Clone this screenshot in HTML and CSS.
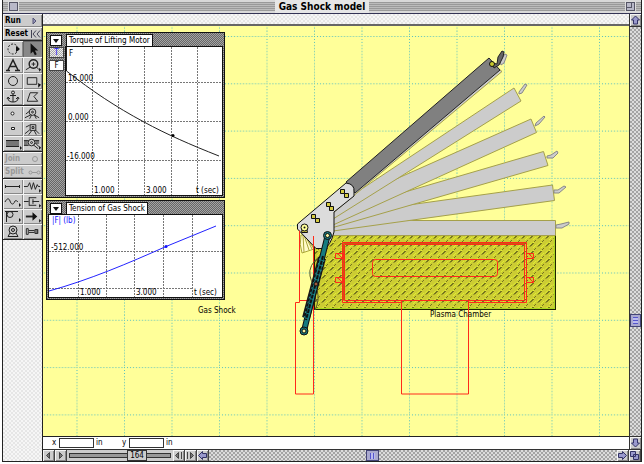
FILE: index.html
```html
<!DOCTYPE html>
<html lang="en">
<head>
  <meta charset="UTF-8" />
  <meta name="viewport" content="width=device-width, initial-scale=1.0" />
  <title>Gas Shock model</title>
  <link rel="stylesheet" href="styles.css">
</head>
<body>
  <div class="window">
    <!-- Title bar -->
    <header class="titlebar">
      <button class="box" aria-label="Close"></button>
      <h1>Gas Shock model</h1>
      <button class="box zoom-box" aria-label="Zoom"></button>
    </header>

    <div class="main">
      <!-- Tool palette -->
      <nav class="palette" aria-label="Tools">
        <button class="command run">Run <svg width="5" height="8"><path d="M1 1v6l3-3z" fill="#99b" stroke="#557"/></svg></button>
        <button class="command last">Reset<svg width="11" height="8"><path d="M1.500 0v8M6 .5L3 4l3 3.500M10 .5L7 4l3 3.500" fill="none" stroke="#445"/></svg></button>

        <div class="tools tall">
          <button aria-label="Rotate"><svg viewBox="0 0 20 16"><circle cx="10" cy="8" r="5" stroke-dasharray="2 1.500"/><path class="solid" d="M13 5l4 3-4 3z"/></svg></button>
          <button class="active" aria-label="Select"><svg viewBox="0 0 20 16"><path class="solid" d="M8 2v11l2.500-2.500 2 4 2-1-2-4h3.500z"/></svg></button>
          <button aria-label="Text"><svg viewBox="0 0 20 16"><path d="M5 13l5-10 5 10M7 9.500h6M3 13.500h4M12 13.500h5" stroke-width="1.500"/></svg></button>
          <button aria-label="Magnify"><svg viewBox="0 0 20 16"><circle cx="11" cy="7" r="4.500" stroke-width="1.500"/><path d="M9 7h4M11 5v4M8 10l-5 3M14 10l3 3"/><path class="solid" d="M17 11l2 2-2 2z"/></svg></button>
          <button aria-label="Circle"><svg viewBox="0 0 20 16"><circle cx="10" cy="8" r="4.500"/></svg></button>
          <button aria-label="Rectangle"><svg viewBox="0 0 20 16"><path d="M4.500 4.500h10v7h-10z"/><path class="solid" d="M16 10l3 2-3 3z"/></svg></button>
          <button aria-label="Anchor"><svg viewBox="0 0 20 16"><circle cx="10" cy="3.500" r="1.500"/><path d="M10 5v8M7 6.500h6M5 9c0 3 2 4 5 4s5-1 5-4M4 10l1-2 2 2M13 10l2-2 1 2"/></svg></button>
          <button aria-label="Polygon"><svg viewBox="0 0 20 16"><path d="M7.500 3.500h8l-4 4 4 5h-11z"/></svg></button>
        </div>

        <div class="tools">
          <button aria-label="Point"><svg viewBox="0 0 20 15"><circle cx="9.500" cy="7.500" r="1.500" class="light"/></svg></button>
          <button aria-label="Pin joint"><svg viewBox="0 0 20 15"><circle cx="10" cy="6" r="3.500"/><circle cx="10" cy="6" r="1"/><path d="M8 9l-6 3M12 9l5 3M7 5L3 8M9 9l-2 4M12 9l2 4"/></svg></button>
          <button aria-label="Square point"><svg viewBox="0 0 20 15"><path d="M8.500 6.500h3v2h-3z" class="light"/></svg></button>
          <button aria-label="Rigid joint"><svg viewBox="0 0 20 15"><path d="M7.500 3.500h6v6h-6zM9.500 5.500h2v2h-2zM7 9l-5 4M13 9l4 4M7 4L3 6M9 10l-3 4M12 10l2 4"/></svg></button>
          <button aria-label="Slot joint"><svg viewBox="0 0 20 15"><path class="bar" d="M3 5h13v5H3z"/><path d="M3 4.500h13M3 10.500h13"/><path class="solid" d="M17 10l2 2-2 2z"/></svg></button>
          <button aria-label="Keyed slot joint"><svg viewBox="0 0 20 15"><path class="bar" d="M1 4h4v5H1zM13 4h4v4h-4z"/><circle cx="9" cy="6.500" r="3.500"/><circle cx="9" cy="6.500" r="1"/><path d="M1 4.500h5M1 9.500h5M12 4.500h5M11 9l5 4M13 7l4 4"/><path class="solid" d="M17 10l2 2-2 2z"/></svg></button>
        </div>
        <button class="command off" disabled>Join <svg width="10" height="8"><circle cx="4" cy="4" r="2.500" fill="none" stroke="#999"/></svg></button>
        <button class="command off last" disabled>Split<svg width="13" height="8"><path d="M4 4.500h5" stroke="#999"/><circle cx="2.500" cy="4.500" r="1.500" fill="none" stroke="#999"/><circle cx="10.500" cy="4.500" r="1.500" fill="none" stroke="#999"/></svg></button>

        <div class="tools">
          <button aria-label="Rod"><svg viewBox="0 0 20 15"><path d="M2 7.500h15M2.500 6v3M16.500 6v3"/></svg></button>
          <button aria-label="Spring"><svg viewBox="0 0 20 15"><path d="M1 7.500h4l2-4 2 7 2-7 2 7 2-5 1 2h2"/><path class="solid" d="M17 10l2 2-2 2z"/></svg></button>
          <button aria-label="Rope"><svg viewBox="0 0 20 15"><path d="M2 8c2-4 4-4 5-1s3 5 5 0c1-1 2 0 3 1"/><path class="solid" d="M16 9l2 2-2 2z"/></svg></button>
          <button aria-label="Damper"><svg viewBox="0 0 20 15"><path d="M1 7.500h5M6.500 3v9M14 3.500H6.500M14 11.500H6.500M10.500 5v5M10 7.500h7"/><path class="solid" d="M17 10l2 2-2 2z"/></svg></button>
          <button aria-label="Pulley"><svg viewBox="0 0 20 15"><circle cx="7" cy="5.500" r="3"/><path d="M2 2.500h13M3.500 3v10"/><path class="solid" d="M16 9l2 2-2 2z"/></svg></button>
          <button aria-label="Force"><svg viewBox="0 0 20 15"><path d="M3 7.500h8" stroke-width="2"/><path class="solid" d="M10 3l5 4.500-5 4.500zM17 10l2 2-2 2z"/></svg></button>
          <button aria-label="Motor"><svg viewBox="0 0 20 15"><circle cx="10" cy="6" r="4"/><circle cx="10" cy="6" r="1.500"/><path d="M7 9l-2 3.500h10L13 9"/></svg></button>
          <button aria-label="Actuator"><svg viewBox="0 0 20 15"><path class="bar" d="M13 5h3v5h-3z"/><path d="M3.500 4.500h2v6h-2zM6 6.500h6M6 8.500h6M12.500 5.500h3v4h-3z"/></svg></button>
        </div>
      </nav>

      <div class="document">
        <div class="ruler"></div>

        <!-- Drawing canvas -->
        <main class="canvas">
          <svg class="drawing" aria-label="Gas shock mechanism">
            <defs>
              <pattern id="grid" x="29" y="36" width="47.500" height="47.300" patternUnits="userSpaceOnUse">
                <path d="M0 .5h47M.5 0v47" stroke="#4fbcc0" stroke-dasharray="1 2" fill="none"/>
              </pattern>
              <pattern id="hatch" width="8" height="8" patternUnits="userSpaceOnUse">
                <rect width="8" height="8" fill="#cccc33"/>
                <path d="M1 5.500l3-3M5 8l3-3M5 3l2-2" stroke="#e0f030"/>
                <path d="M2 6.500l3.500-3.500" stroke="#22220a"/>
                <path d="M6 2l2-2" stroke="#77771c"/>
              </pattern>
            </defs>
            <g transform="translate(-43 -26)">
              <rect x="43" y="26" width="100%" height="100%" fill="url(#grid)"/>

              <!-- Plasma chamber -->
              <rect x="314.500" y="235.500" width="241" height="74" fill="url(#hatch)" stroke="#222200"/>
              <path d="M554.500 236v72.500H315" fill="none" stroke="#a8d820"/>
              <g class="outline">
                <path d="M343.500 243.500h181M343.500 243.500v57" stroke="#c85a10"/>
                <path d="M342.500 242.500h184v60h-58M401 302.500h-58.500v-60M344.500 300.500v-56h180v56z"/>
                <rect x="372.500" y="259.500" width="125" height="17" rx="3"/>
                <path d="M335.500 253.500h8v5h-8zM335.500 277.500h8v5h-8zM526.500 253.500h7v5h-7zM526.500 277.500h7v5h-7zM338 254l4 4M338 278l4 4M529 254l4 4M529 278l4 4"/>
                <path d="M401.500 300.500h67v93.500h-67z"/>
              </g>

              <!-- Traced positions of the arm -->
              <g class="ghost">
                <path d="M333 220.500h222.500v15H333z"/>
                <path d="M333 215.500L552.500 185l2 15.500L333 231z"/>
                <path d="M333 213L543.500 151.500l4.500 14L333 227.500z"/>
                <path d="M333 207L531 119l5.500 13.500L333 225z"/>
                <path d="M333 208L514 88l7 13L333 219z"/>
                <path d="M350 188L490 62l12 9.500L333 213z"/>
                <path class="hook" d="M501 65l3-2 3-8-2-1-5 7zM519 94l3-1 5-8-2-1-6 8zM535 126l4-2 6-7-1-1-8 7zM547 158h6l5-5-1-2-6 4-4 1zM554 193h5l7-6-2-1-6 4h-4zM556 228h6l7-4v-2l-8 2-5 1z"/>
              </g>
              <path d="M301 235q-2 10 1 18l12-4-9-14zM303 235l1 17M304 235l5 15M305 235l7 14" fill="#fffcc8" stroke="#aaa638"/>

              <!-- Arm and plate -->
              <path d="M346 182L489 58l11 12L355 193z" fill="#808080" stroke="#222"/>
              <path d="M492 63l5 1 1-7 4-6 2 1-1 5-4 8-5 3z" fill="#666" stroke="#222"/>
              <circle cx="492" cy="64" r="2.500" fill="#c9c92c" stroke="#111"/>
              <path d="M297.500 224L346 183q9 1 8 9v4l-20 16v20q-4 15-10 16.500h-8L297.500 229z" fill="#dcdcdc" stroke="#111"/>
              <path class="outline" d="M313.500 236v158h-18v-91.500h4v-72M299.500 300.500h14"/>
              <g fill="#d6cc42" stroke="#111">
                <path d="M340.500 189.500h4v4h-4zM344.500 193.500h4v4h-4zM326.500 202.500h4v4h-4zM329.500 206.500h4v4h-4zM311.500 214.500h4v4h-4zM315.500 218.500h4v4h-4z"/>
                <path d="M301.500 232.500l1-5h4l1 5z"/>
                <circle cx="304.500" cy="227.500" r="3.500" fill="#ffff9a"/>
              </g>
              <circle cx="304.500" cy="227.500" r="1" fill="#111"/>

              <!-- Gas shock -->
              <path d="M320 256q-12 9-10 20t10 9M318 280q-5 8-2 22M317 290q3 10-2 20" fill="none" stroke="#55552a"/>
              <path d="M322 258L306 318" stroke="#1a1a1a" stroke-width="8"/>
              <path d="M327.500 236L304 331" stroke="#111" stroke-width="6" stroke-linecap="round"/>
              <path d="M327.500 236L304 331" stroke="#167b80" stroke-width="4" stroke-linecap="round"/>
              <path d="M320 258L304 318M324 260L308 318" stroke="#2c8c90" stroke-dasharray="2 3"/>
              <path d="M323 256L306 320" stroke="#111" stroke-width="2" stroke-dasharray="4 1"/>
              <g fill="#f4f3a0" stroke="#111">
                <circle cx="327.500" cy="235.500" r="4" fill="#167b80"/>
                <circle cx="327.500" cy="235.500" r="2"/>
                <circle cx="304" cy="331" r="4" fill="#167b80"/>
                <circle cx="304" cy="331" r="2"/>
                <circle cx="316" cy="284" r="2" fill="#a45a3a"/>
              </g>

              <text x="198" y="313">Gas Shock</text>
              <text x="430" y="317">Plasma Chamber</text>
            </g>
          </svg>

          <!-- Torque meter -->
          <section class="meter torque">
            <div class="meter-head">
              <button class="menu" aria-label="Torque meter menu"></button>
              <h2>Torque of Lifting Motor</h2>
            </div>
            <div class="meter-body">
              <div class="toggles">
                <button class="on">T</button>
                <button>F</button>
              </div>
              <svg class="plot" width="156" height="148">
                <path class="lines" d="M26.500 0v148M52.500 0v148M78.500 0v148M105.500 0v148M131.500 0v148M0 35.500h156M0 74.500h156M0 113.500h156"/>
                <path class="curve" d="M.5 0v24C26 44 50 60 78 75C100 87 125 98 153 109"/>
                <circle cx="107" cy="88.500" r="1.500"/>
                <text x="3" y="9">F</text>
                <text x="2" y="34">16.000</text>
                <text x="2" y="73">0.000</text>
                <text x="1" y="112">-16.000</text>
                <text x="28" y="146">1.000</text>
                <text x="80" y="146">3.000</text>
                <text x="130" y="146">t (sec)</text>
              </svg>
            </div>
          </section>

          <!-- Tension meter -->
          <section class="meter tension">
            <div class="meter-head">
              <button class="menu" aria-label="Tension meter menu"></button>
              <h2>Tension of Gas Shock</h2>
            </div>
            <div class="meter-body">
              <svg class="plot" width="173" height="82">
                <path class="lines" d="M29.500 0v82M57.500 0v82M85.500 0v82M114.500 0v82M143.500 0v82M0 36.500h173M0 73.500h143"/>
                <path class="curve blue" d="M0 76C40 65 80 48 117 31.500L167 11"/>
                <circle class="blue-dot" cx="117" cy="31.500" r="1.500"/>
                <text class="blue-text" x="3" y="8">|F| (lb)</text>
                <text x="2" y="35">-512.000</text>
                <text x="31" y="80">1.000</text>
                <text x="87" y="80">3.000</text>
                <text x="145" y="80">t (sec)</text>
              </svg>
            </div>
          </section>
        </main>

        <!-- Coordinates -->
        <div class="coords">
          <label for="pos-x">x</label><input id="pos-x" type="text"><span>in</span>
          <label class="second" for="pos-y">y</label><input id="pos-y" type="text"><span>in</span>
        </div>
      </div>

      <div class="scroll-v">
        <button aria-label="Scroll up"><svg viewBox="0 0 11 11"><path d="M5.500 1.500l4 4h-2v4h-4v-4h-2z"/></svg></button>
        <div class="track"><div class="thumb"></div></div>
        <button aria-label="Scroll down"><svg viewBox="0 0 11 11"><path d="M5.500 9.500l4-4h-2v-4h-4v4h-2z"/></svg></button>
      </div>
    </div>

    <!-- Playback and horizontal scroll -->
    <footer class="bottom">
      <div class="foot-pad"></div>
      <button aria-label="Play backward"><svg viewBox="0 0 11 11"><path d="M6.500 2.500l-3 3 3 3z"/></svg></button>
      <button aria-label="Play forward"><svg viewBox="0 0 11 11"><path d="M4.500 2.500l3 3-3 3z"/></svg></button>
      <div class="tape">
        <input id="frame" type="range" min="0" max="240" value="164" aria-label="Frame">
        <output for="frame">164</output>
      </div>
      <button aria-label="Step back"><svg viewBox="0 0 11 11"><path d="M5.500 2.500l-3 3 3 3zM8.500 2v7"/></svg></button>
      <button aria-label="Step forward"><svg viewBox="0 0 11 11"><path d="M5.500 2.500l3 3-3 3zM2.500 2v7"/></svg></button>
      <button class="arrow" aria-label="Scroll left"><svg viewBox="0 0 11 11"><path d="M1.500 5.500l4-4v2h4v4h-4v2z"/></svg></button>
      <div class="track"><div class="thumb"></div></div>
      <button class="arrow" aria-label="Scroll right"><svg viewBox="0 0 11 11"><path d="M9.500 5.500l-4-4v2h-4v4h4v2z"/></svg></button>
      <button class="arrow" aria-label="Resize"><svg viewBox="0 0 11 11"><path d="M4.500 4.500h5v5h-5zM1.500 1.500h5v5h-5z"/></svg></button>
    </footer>
  </div>
</body>
</html>
```
FILE: styles.css
```css
/* Base Styles */
*, *::before, *::after {
  box-sizing: border-box;
}
body {
  margin: 0;
  background: #fff;
  color: #000;
  font-family: "DejaVu Sans Condensed", "DejaVu Sans", sans-serif;
  font-size: 8px;
  line-height: 10px;
}
button, input {
  font: inherit;
  color: inherit;
  margin: 0;
  padding: 0;
  border: none;
  border-radius: 0;
}
/* Bevel is an inset shadow so the icons keep the whole cell */
button {
  background: #ccc;
  box-shadow: inset 1px 1px #f4f4f4, inset -1px -1px #888;
}
svg {
  display: block;
}

.window {
  display: flex;
  flex-direction: column;
  height: calc(100vh - 2px);
  margin: 0 2px;
  border: 1px solid #222;
  border-top: none;
  overflow: hidden;
}

/* Title bar */
.titlebar {
  display: flex;
  align-items: center;
  justify-content: space-between;
  height: 14px;
  padding: 0 6px;
  border-bottom: 1px solid #335;
  background: linear-gradient(#d8d8d8 2px, transparent 2px 11px, #d8d8d8 11px), repeating-linear-gradient(#999 0 1px, #bbb 1px 2px);
}
.titlebar h1 {
  margin: 0;
  padding: 0 4px;
  background: #e6e6e6;
  font-size: 10px;
  line-height: 13px;
  font-weight: 700;
}
.box {
  width: 9px;
  height: 9px;
  background: #b8b8c8;
  border: 1px solid #556;
  outline: 1px solid #ddd;
  box-shadow: none;
}
.zoom-box {
  box-shadow: inset -2px -2px #b8b8c8, inset -3px -3px #556;
}

.main {
  display: flex;
  flex: 1;
  min-height: 0;
}

/* Tool palette */
.palette {
  width: 40px;
  border-right: 1px solid #222;
  background: #eee conic-gradient(#e6e6e6 25%, #f6f6f6 0 50%, #e6e6e6 0 75%, #f6f6f6 0) 0 0 / 4px 4px;
}
.command {
  display: flex;
  align-items: center;
  justify-content: space-between;
  width: 100%;
  height: 13px;
  padding: 0 1px 0 2px;
  font-weight: 700;
}
.command svg {
  flex: none;
}
.command.run {
  padding-right: 5px;
}
.command.last {
  height: 14px;
  border-bottom: 1px solid #222;
}
.off {
  color: #999;
}
.tools {
  display: grid;
  grid-template-columns: 20px 1fr;
  grid-auto-rows: 15px;
  border-bottom: 1px solid #222;
}
.tools.tall {
  grid-auto-rows: 16px;
}
.tools svg {
  width: 100%;
  height: 100%;
  fill: none;
  stroke: #222;
}
.tools .solid {
  fill: #111;
  stroke: none;
}
.tools .bar {
  fill: #777;
  stroke: none;
}
.tools .light {
  fill: #fff;
}
.tools .active {
  background: #888;
  box-shadow: inset 1px 1px #666;
}

/* Document area */
.document {
  display: flex;
  flex-direction: column;
  flex: 1;
  min-width: 0;
}
.ruler {
  height: 12px;
  border-bottom: 2px solid #666;
  background: #eee conic-gradient(#e6e6e6 25%, #f6f6f6 0 50%, #e6e6e6 0 75%, #f6f6f6 0) 0 0 / 4px 4px;
}
.canvas {
  position: relative;
  flex: 1;
  min-height: 0;
  overflow: hidden;
  background: #ffff99;
  border-bottom: 1px solid #222;
}
.drawing {
  width: 100%;
  height: 100%;
}
.outline {
  fill: none;
  stroke: #ff2a1a;
}
.ghost {
  fill: #ccc;
  stroke: #a5a04a;
}
.hook {
  stroke: #888;
}

/* Meters */
.meter {
  position: absolute;
  left: 3px;
  padding: 1px 2px 2px;
  border: 1px solid #111;
  background: conic-gradient(#666 25%, #a4a4a4 0 50%, #666 0 75%, #a4a4a4 0) 0 0 / 2px 2px;
}
.torque {
  top: 6px;
}
.tension {
  top: 174px;
}
.meter-head {
  display: flex;
  align-items: center;
  gap: 4px;
  height: 13px;
}
.meter h2 {
  margin: 0;
  padding: 0 2px;
  background: #fff;
  border: 1px solid #111;
  font-size: 8px;
  font-weight: 400;
  line-height: 11px;
}
.menu {
  width: 12px;
  height: 11px;
  margin-left: 1px;
  padding: 0 2px;
  background: #fff;
  border: 1px solid #111;
  box-shadow: none;
}
.menu::before {
  content: "";
  display: block;
  border: 3px solid transparent;
  border-top: 4px solid #111;
  border-bottom: none;
}
.meter-body {
  display: flex;
  justify-content: flex-end;
}
.toggles {
  display: flex;
  flex-direction: column;
  gap: 2px;
  width: 17px;
  padding-right: 2px;
}
.toggles button {
  height: 11px;
  background: #fff;
  border: 1px solid #444;
  line-height: 9px;
  box-shadow: none;
}
.toggles .on {
  background: conic-gradient(#aaa 25%, #eee 0 50%, #aaa 0 75%, #eee 0) 0 0 / 2px 2px;
  color: #22f;
}
.plot {
  background: #fff;
  outline: 1px solid #111;
}
.lines {
  fill: none;
  stroke: #777;
  stroke-dasharray: 2 1;
}
.curve {
  fill: none;
  stroke: #222;
}
.blue {
  stroke: #22f;
}
.blue-dot, .blue-text {
  fill: #11f;
}

/* Coordinates */
.coords {
  display: flex;
  align-items: center;
  height: 12px;
  padding-left: 9px;
  background: #fff;
}
.coords label {
  width: 7px;
}
.coords .second {
  margin-left: 18px;
}
.coords input {
  width: 35px;
  height: 10px;
  margin-right: 2px;
  border: 1px solid #333;
}
.coords span {
  width: 8px;
}

/* Scroll bars */
.scroll-v {
  display: flex;
  flex-direction: column;
  width: 12px;
  border-left: 1px solid #333;
}
.scroll-v button {
  height: 12px;
}
.track {
  flex: 1;
  display: flex;
  background: conic-gradient(#a4a4a4 25%, #dcdcdc 0 50%, #a4a4a4 0 75%, #dcdcdc 0) 0 0 / 4px 4px;
}
.scroll-v .track {
  flex-direction: column;
  padding-top: 287px;
  border: solid #333;
  border-width: 1px 0;
}
.thumb {
  height: 13px;
  border: 1px solid #447;
  background: repeating-linear-gradient(#55c 0 1px, #bbe 1px 3px) center / 5px 7px no-repeat #aaa9cf;
}
.scroll-v svg, .bottom svg {
  width: 100%;
  height: 100%;
}
.scroll-v path, .bottom .arrow path {
  fill: #99c;
  stroke: #336;
}

/* Bottom bar */
.bottom {
  display: flex;
  height: 12px;
  border-top: 1px solid #333;
}
.bottom button {
  width: 12px;
  border-right: 1px solid #444;
}
.bottom path {
  fill: #777;
  stroke: #444;
}
.foot-pad {
  width: 40px;
  border-right: 1px solid #222;
  margin-top: -1px;
  background: #eee conic-gradient(#e6e6e6 25%, #f6f6f6 0 50%, #e6e6e6 0 75%, #f6f6f6 0) 0 0 / 4px 4px;
}
.tape {
  position: relative;
  width: 106px;
  padding: 0 2px;
  background: #ccc;
}
.tape input {
  display: block;
  appearance: none;
  width: 100%;
  height: 5px;
  margin-top: 3px;
  background: #999;
  border: 1px solid #333;
}
.tape input::-webkit-slider-thumb {
  appearance: none;
  width: 20px;
  height: 3px;
  background: #999;
}
.tape output {
  position: absolute;
  top: 0;
  left: 60px;
  width: 20px;
  height: 11px;
  background: #ccc;
  border: 1px solid #333;
  text-align: center;
  line-height: 9px;
}
.bottom .track {
  padding-left: 157px;
}
.bottom .thumb {
  width: 13px;
  height: 11px;
  background: repeating-linear-gradient(90deg, #55c 0 1px, #bbe 1px 3px) center / 5px 6px no-repeat #aaa9cf;
}
```
